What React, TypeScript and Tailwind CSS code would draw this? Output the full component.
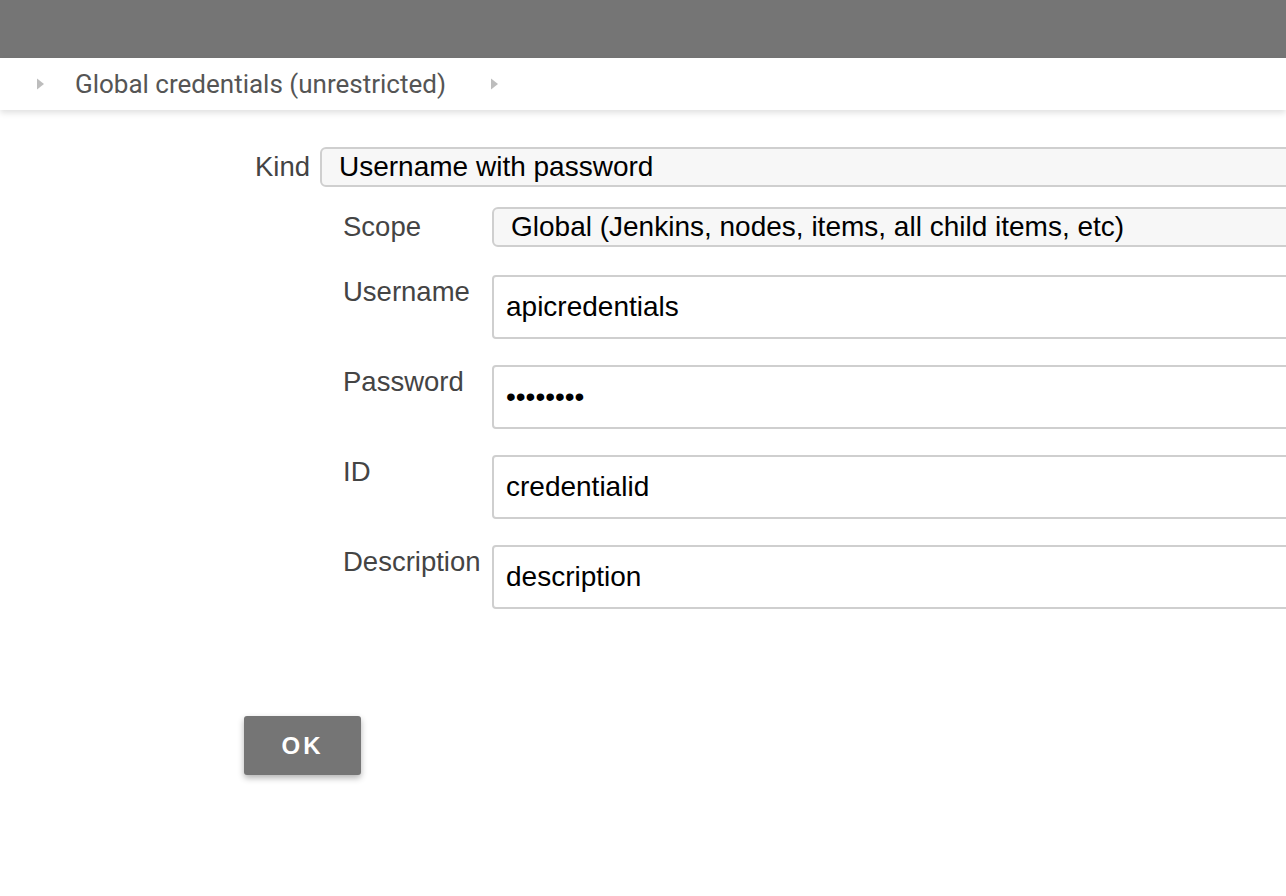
import React from 'react'

const Caret = () => (
  <svg width="9" height="14" viewBox="0 0 9 14" className="shrink-0">
    <path d="M1 1.5 L8 7 L1 12.5 Z" fill="#bdbdbd" />
  </svg>
)

const fieldFont = { fontFamily: '"Liberation Sans", Arial, sans-serif' }

// one nested field row: label on the left, text box on the right
const Field = ({ label, value }: { label: string; value: string }) => (
  <div className="flex items-start">
    <div className="w-[149px] shrink-0 pt-[2px] text-[27.5px] leading-[30px] text-[#444]">{label}</div>
    <div className="flex h-[64px] flex-1 items-center rounded-[4px] border-2 border-[#cfcfcf] bg-white pl-[12px] text-[28px] leading-[30px] text-black">
      {value}
    </div>
  </div>
)

export default function App() {
  return (
    <div className="h-[896px] w-[1286px] overflow-hidden bg-white" style={fieldFont}>
      {/* top bar */}
      <div className="h-[58px] bg-[#757575]" />

      {/* breadcrumb */}
      <div className="relative z-10 flex h-[52px] items-center bg-white pl-[36px] shadow-[0_3px_6px_rgba(0,0,0,0.12)]">
        <Caret />
        <span
          className="ml-[30px] text-[26px] leading-[30px] text-[#555]"
          style={{ fontFamily: 'Roboto, "Liberation Sans", sans-serif' }}
        >
          Global credentials (unrestricted)
        </span>
        <span className="ml-[44px]">
          <Caret />
        </span>
      </div>

      {/* form */}
      <div className="pt-[37px]">
        <div className="flex items-center pl-[255px]">
          <div className="w-[65px] shrink-0 text-[27.5px] leading-[30px] text-[#444]">Kind</div>
          <div className="flex h-[40px] w-[1100px] shrink-0 items-center rounded-[6px] border-2 border-[#cfcfcf] bg-[#f7f7f7] pl-[17px] text-[28px] leading-[30px] text-black">
            Username with password
          </div>
        </div>

        <div className="mt-[20px] flex w-[1400px] flex-col gap-[26px] pl-[343px]">
          <div className="mb-[2px] flex items-center">
            <div className="w-[149px] shrink-0 text-[27.5px] leading-[30px] text-[#444]">Scope</div>
            <div className="flex h-[40px] flex-1 items-center rounded-[6px] border-2 border-[#cfcfcf] bg-[#f7f7f7] pl-[17px] text-[28px] leading-[30px] text-black">
              Global (Jenkins, nodes, items, all child items, etc)
            </div>
          </div>
          <Field label="Username" value="apicredentials" />
          <Field label="Password" value="••••••••" />
          <Field label="ID" value="credentialid" />
          <Field label="Description" value="description" />
        </div>

        <div className="mt-[107px] pl-[244px]">
          <button
            className="h-[59px] w-[117px] rounded-[3px] bg-[#757575] text-[24px] font-bold leading-[30px] tracking-[0.12em] text-white shadow-[0_3px_6px_rgba(0,0,0,0.3)]"
            style={fieldFont}
          >
            OK
          </button>
        </div>
      </div>
    </div>
  )
}
